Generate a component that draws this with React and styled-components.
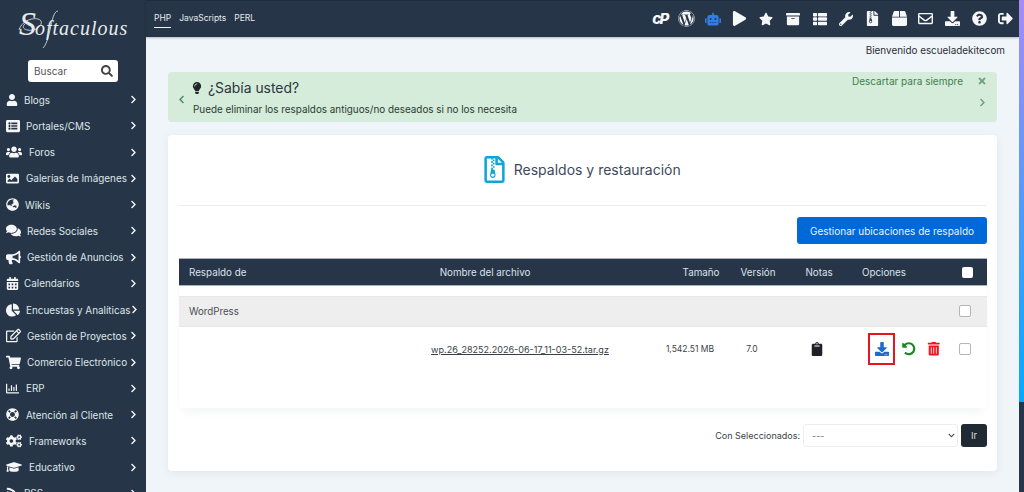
import React from "react";
import styled, { createGlobalStyle } from "styled-components";
import {
  FaUser, FaListAlt, FaUsers, FaImage, FaGlobeAsia, FaComments, FaBullhorn, FaCalendarAlt,
  FaChartPie, FaRegEdit, FaShoppingCart, FaRegChartBar, FaLifeRing, FaCogs, FaGraduationCap, FaRss,
  FaChevronRight, FaChevronLeft, FaSearch, FaWordpress, FaRobot, FaPlay, FaStar, FaArchive,
  FaThList, FaWrench, FaFileArchive, FaBox, FaRegEnvelope, FaDownload, FaQuestionCircle, FaSignOutAlt,
  FaLightbulb, FaTimes, FaRegFileArchive, FaClipboard, FaUndoAlt, FaTrashAlt, FaChevronDown,
} from "react-icons/fa";

const dark = "#263547";
const sans = `"Inter", "Open Sans", "Liberation Sans", sans-serif`;

const Global = createGlobalStyle`
  html, body { margin: 0; padding: 0; height: 492px; overflow: hidden; background: #f0f5f9; }
  * { box-sizing: border-box; }
  body { font-family: ${sans}; }
`;

const Page = styled.div`
  display: flex;
  width: 1024px;
  height: 492px;
  overflow: hidden;
`;

const Sidebar = styled.aside`
  flex: 0 0 146px;
  height: 492px;
  background: ${dark};
  overflow: hidden;
  color: #e6ebf0;
`;

const Logo = styled.div`
  position: relative;
  height: 60px;
  padding: 12px 0 0 19px;
  font-family: "Liberation Serif", serif;
  font-style: italic;
  font-size: 20px;
  line-height: 24px;
  letter-spacing: 1px;
  white-space: nowrap;
  color: #e8ebee;
`;

const LogoCap = styled.span`
  font-size: 34px;
  font-weight: 400;
  letter-spacing: -1px;
`;

const LogoSwash = styled.svg`
  position: absolute;
  left: 0;
  top: 0;
  width: 146px;
  height: 60px;
  fill: none;
  stroke: #e8ebee;
  stroke-width: 0.8;
`;

const SearchBox = styled.div`
  display: flex;
  align-items: center;
  justify-content: space-between;
  width: 90px;
  height: 22px;
  margin: 0 0 4.5px 28px;
  padding: 0 5px 0 6px;
  background: #fff;
  border-radius: 3px;
  color: #555;
  font-size: 10px;
`;

const SideItem = styled.div`
  display: flex;
  align-items: center;
  height: 26.25px;
  padding-left: 6px;
  font-size: 9.9px;
  white-space: nowrap;
`;

const SideIcon = styled.span`
  display: flex;
  align-items: center;
  flex: 0 0 ${(p) => p.$w}px;
  font-size: ${(p) => p.$size}px;
  color: #f4f6f8;
`;

const SideLabel = styled.span`
  flex: 1;
  color: #dfe5ea;
`;

const SideArrow = styled.span`
  display: flex;
  flex: 0 0 17px;
  font-size: 9px;
  color: #f4f6f8;
`;

const Column = styled.div`
  flex: 0 0 873px;
  height: 492px;
  display: flex;
  flex-direction: column;
`;

const Header = styled.header`
  flex: 0 0 37px;
  display: flex;
  align-items: stretch;
  justify-content: space-between;
  background: ${dark};
  box-shadow: 0 1px 2px rgba(0, 0, 0, 0.25);
  padding-left: 8px;
  border-top: 1px solid #1f2c3b;
`;

const TopNav = styled.nav`
  display: flex;
  gap: 8px;
  font-size: 8.5px;
  color: #e6ebf0;
`;

const TopLink = styled.span`
  height: 27px;
  padding-top: 12px;
  line-height: 11px;
  border-bottom: ${(p) => (p.$active ? "1px solid #f2f4f6" : "none")};
`;

const IconBar = styled.div`
  display: flex;
  align-items: center;
  padding-bottom: 1px;
`;

const TopIcon = styled.span`
  display: flex;
  align-items: center;
  justify-content: center;
  width: 26.6px;
  font-size: ${(p) => p.$size || 16}px;
  color: ${(p) => p.$color || "#f6f7f9"};
`;

const CpMark = styled.span`
  font-family: "Inter", sans-serif;
  font-size: 15px;
  font-weight: 800;
  font-style: italic;
  letter-spacing: -1.5px;
  line-height: 1;
`;

const Welcome = styled.div`
  height: 35px;
  padding: 6px 14px 0 0;
  text-align: right;
  font-size: 9.9px;
  line-height: 14px;
  color: #2b2f36;
`;

const Content = styled.main`
  flex: 1;
  padding: 0 22px;
  display: flex;
  flex-direction: column;
`;

const Notice = styled.section`
  height: 50px;
  display: flex;
  background: #d4ecd9;
  border-radius: 4px;
  color: #2a3a2f;
`;

const NoticeLeft = styled.div`
  flex: 0 0 25px;
  display: flex;
  align-items: center;
  padding: 5px 0 0 9px;
  font-size: 9px;
  color: #4a8a5c;
`;

const NoticeBody = styled.div`
  flex: 1;
  padding-top: 7px;
`;

const NoticeTitle = styled.div`
  display: flex;
  align-items: center;
  gap: 5px;
  height: 18px;
  font-size: 13.9px;
  color: #2c3540;
  svg { font-size: 12px; color: #1f2528; margin-left: -2px; }
`;

const NoticeText = styled.div`
  margin-top: 6px;
  font-size: 9.9px;
  line-height: 12px;
  color: #2c3a33;
`;

const NoticeRight = styled.div`
  display: flex;
  flex-direction: column;
  align-items: flex-end;
  padding: 2px 10px 0 0;
`;

const Dismiss = styled.div`
  display: flex;
  align-items: center;
  gap: 14px;
  height: 14px;
  font-size: 10px;
  color: #3f8050;
  svg { font-size: 10px; color: #6f9d7d; }
`;

const NextArrow = styled.div`
  display: flex;
  margin-top: 10px;
  font-size: 9px;
  color: #6f9d7d;
`;

const Card = styled.section`
  margin-top: 13px;
  height: 336px;
  padding: 0 10px 0 11px;
  background: #fff;
  border-radius: 4px;
  box-shadow: 0 2px 8px rgba(40, 60, 90, 0.08);
  display: flex;
  flex-direction: column;
`;

const CardTitle = styled.div`
  height: 71px;
  display: flex;
  align-items: center;
  justify-content: center;
  gap: 5.5px;
  border-bottom: 1px solid #eeeeee;
  padding: 0 4px 1px 0;
  margin-bottom: 11px;
  font-size: 14px;
  color: #3d4a5c;
  svg { font-size: 27px; color: #0ea5d9; margin-bottom: 1px; }
`;

const ActionRow = styled.div`
  display: flex;
  justify-content: flex-end;
  margin-bottom: 14px;
`;

const PrimaryButton = styled.button`
  width: 190px;
  height: 27px;
  border: 0;
  border-radius: 3px;
  background: #0069d9;
  color: #e8f1fc;
  font-family: ${sans};
  font-size: 10px;
  padding: 0;
`;

const Table = styled.div`
  height: 150px;
  box-shadow: 0 6px 10px -4px rgba(40, 60, 90, 0.07);
`;

const HeadRow = styled.div`
  display: grid;
  grid-template-columns: 221px 170px 100px 62px 52px 70px 60px 1fr;
  align-items: center;
  height: 28px;
  background: ${dark};
  color: #dde3e9;
  font-size: 9.8px;
  border-top: 1px solid #a9b2bc;
  border-bottom: 1px solid #a9b2bc;
  margin-bottom: 10px;
`;

const Cell = styled.div`
  display: flex;
  align-items: center;
  justify-content: ${(p) => p.$align || "center"};
  padding-left: ${(p) => p.$pl || 0}px;
  padding-right: ${(p) => p.$pr || 0}px;
  white-space: nowrap;
`;

const GroupRow = styled.div`
  display: flex;
  align-items: center;
  justify-content: space-between;
  height: 31px;
  padding: 0 16px 1px 10px;
  background: #eeeeee;
  border-top: 1px solid #e8e8e8;
  border-bottom: 1px solid #e6e6e6;
  font-size: 9.7px;
  color: #4a4f55;
`;

const FileRow = styled.div`
  display: grid;
  grid-template-columns: 221px 240px 100px 24px 104px 75px 1fr;
  align-items: center;
  height: 44px;
  font-size: 8.5px;
  color: #3a3f46;
`;

const FileLink = styled.a`
  color: #3a3f46;
  text-decoration: underline;
  font-size: 9.05px;
`;

const Check = styled.input.attrs({ type: "checkbox" })`
  appearance: none;
  display: block;
  width: ${(p) => (p.$white ? 11 : 12)}px;
  height: ${(p) => (p.$white ? 11 : 12)}px;
  margin: 0;
  background: #fff;
  border: ${(p) => (p.$white ? "0" : "1.5px solid #b5b5b5")};
  border-radius: 2px;
`;

const ClipIcon = styled.span`
  display: flex;
  font-size: 14px;
  color: #1d2126;
`;

const Actions = styled.div`
  display: flex;
  align-items: center;
`;

const Highlight = styled.span`
  display: flex;
  align-items: center;
  justify-content: center;
  width: 27px;
  height: 32px;
  border: 2px solid #e8141f;
  font-size: 14px;
  color: #1a6bd0;
`;

const ActionIcon = styled.span`
  display: flex;
  margin-left: ${(p) => p.$ml}px;
  font-size: 13.5px;
  color: ${(p) => p.$color};
`;

const BulkRow = styled.div`
  display: flex;
  align-items: center;
  justify-content: flex-end;
  gap: 3px;
  height: 23px;
  margin-top: 16px;
  font-size: 9px;
  color: #3a3f46;
`;

const SelectWrap = styled.div`
  position: relative;
  width: 155px;
  height: 23px;
  svg { position: absolute; right: 3px; top: 8px; font-size: 7px; color: #444; }
`;

const Select = styled.select`
  appearance: none;
  display: block;
  width: 100%;
  height: 100%;
  padding: 0 8px;
  background: #fff;
  border: 1px solid #eceef0;
  border-radius: 3px;
  color: #777;
  font-family: ${sans};
  font-size: 9px;
`;

const GoButton = styled.button`
  width: 26px;
  height: 23px;
  border: 0;
  border-radius: 3px;
  background: #212a33;
  color: #d9dde1;
  font-family: ${sans};
  font-size: 9.5px;
  padding: 0;
`;

const EdgeStrip = styled.div`
  flex: 0 0 5px;
  display: flex;
  flex-direction: column;
  background: ${dark};
`;

const EdgeGradient = styled.div`
  height: 402px;
  background: linear-gradient(180deg, #a78bf6 0%, #00aaff 100%);
`;

const menu = [
  [FaUser, 18, 12, "Blogs"],
  [FaListAlt, 20, 14, "Portales/CMS"],
  [FaUsers, 23, 16, "Foros"],
  [FaImage, 20, 13, "Galerías de Imágenes"],
  [FaGlobeAsia, 19, 13, "Wikis"],
  [FaComments, 21, 15, "Redes Sociales"],
  [FaBullhorn, 21, 15, "Gestión de Anuncios"],
  [FaCalendarAlt, 18, 13, "Calendarios"],
  [FaChartPie, 20, 14, "Encuestas y Analíticas"],
  [FaRegEdit, 21, 15, "Gestión de Proyectos"],
  [FaShoppingCart, 21, 15, "Comercio Electrónico"],
  [FaRegChartBar, 20, 13, "ERP"],
  [FaLifeRing, 20, 13, "Atención al Cliente"],
  [FaCogs, 23, 16, "Frameworks"],
  [FaGraduationCap, 23, 16, "Educativo"],
  [FaRss, 18, 13, "RSS"],
];

const topIcons = [
  [FaWordpress, 17], [FaRobot, 16, "#2f7fe8"], [FaPlay, 15], [FaStar, 14], [FaArchive, 14],
  [FaThList, 14], [FaWrench, 14], [FaFileArchive, 15], [FaBox, 15], [FaRegEnvelope, 15], [FaDownload, 15],
  [FaQuestionCircle, 15], [FaSignOutAlt, 15],
];

export default function App() {
  return (
    <Page>
      <Global />
      <Sidebar>
        <Logo>
          <LogoCap>S</LogoCap>oftaculous
          <LogoSwash viewBox="0 0 146 60" aria-hidden="true">
            <path d="M19 30 C22 19 38 16 41 21 C43 25 36 32 27 30 C23 29 22 26 25 24" />
            <path d="M58 11 C54 11 52 20 50 30 C48 39 46 45 43 48" />
          </LogoSwash>
        </Logo>
        <SearchBox>
          Buscar
          <FaSearch size={12} color="#444" />
        </SearchBox>
        {menu.map(([Icon, w, size, label]) => (
          <SideItem key={label}>
            <SideIcon $w={w} $size={size}><Icon /></SideIcon>
            <SideLabel>{label}</SideLabel>
            <SideArrow><FaChevronRight /></SideArrow>
          </SideItem>
        ))}
      </Sidebar>
      <Column>
        <Header>
          <TopNav>
            <TopLink $active>PHP</TopLink>
            <TopLink>JavaScripts</TopLink>
            <TopLink>PERL</TopLink>
          </TopNav>
          <IconBar>
            <TopIcon><CpMark>cP</CpMark></TopIcon>
            {topIcons.map(([Icon, size, color], i) => (
              <TopIcon key={i} $size={size} $color={color}><Icon /></TopIcon>
            ))}
          </IconBar>
        </Header>
        <Welcome>Bienvenido escueladekitecom</Welcome>
        <Content>
          <Notice>
            <NoticeLeft><FaChevronLeft /></NoticeLeft>
            <NoticeBody>
              <NoticeTitle><FaLightbulb />¿Sabía usted?</NoticeTitle>
              <NoticeText>Puede eliminar los respaldos antiguos/no deseados si no los necesita</NoticeText>
            </NoticeBody>
            <NoticeRight>
              <Dismiss>Descartar para siempre<FaTimes /></Dismiss>
              <NextArrow><FaChevronRight /></NextArrow>
            </NoticeRight>
          </Notice>
          <Card>
            <CardTitle><FaRegFileArchive />Respaldos y restauración</CardTitle>
            <ActionRow>
              <PrimaryButton>Gestionar ubicaciones de respaldo</PrimaryButton>
            </ActionRow>
            <Table>
              <HeadRow>
                <Cell $align="flex-start" $pl={10}>Respaldo de</Cell>
                <Cell>Nombre del archivo</Cell>
                <span />
                <Cell>Tamaño</Cell>
                <Cell>Versión</Cell>
                <Cell>Notas</Cell>
                <Cell>Opciones</Cell>
                <Cell $align="flex-end" $pr={14}><Check $white /></Cell>
              </HeadRow>
              <GroupRow>
                WordPress
                <Check />
              </GroupRow>
              <FileRow>
                <span />
                <Cell><FileLink>wp.26_28252.2026-06-17_11-03-52.tar.gz</FileLink></Cell>
                <Cell>1,542.51 MB</Cell>
                <Cell>7.0</Cell>
                <Cell $pl={2}><ClipIcon><FaClipboard /></ClipIcon></Cell>
                <Actions>
                  <Highlight><FaDownload /></Highlight>
                  <ActionIcon $ml={7} $color="#138a1c"><FaUndoAlt /></ActionIcon>
                  <ActionIcon $ml={11} $color="#f0141e"><FaTrashAlt /></ActionIcon>
                </Actions>
                <Cell $align="flex-end" $pr={16}><Check /></Cell>
              </FileRow>
            </Table>
            <BulkRow>
              Con Seleccionados:
              <SelectWrap>
                <Select defaultValue="">
                  <option value="">---</option>
                </Select>
                <FaChevronDown />
              </SelectWrap>
              <GoButton>Ir</GoButton>
            </BulkRow>
          </Card>
        </Content>
      </Column>
      <EdgeStrip><EdgeGradient /></EdgeStrip>
    </Page>
  );
}
